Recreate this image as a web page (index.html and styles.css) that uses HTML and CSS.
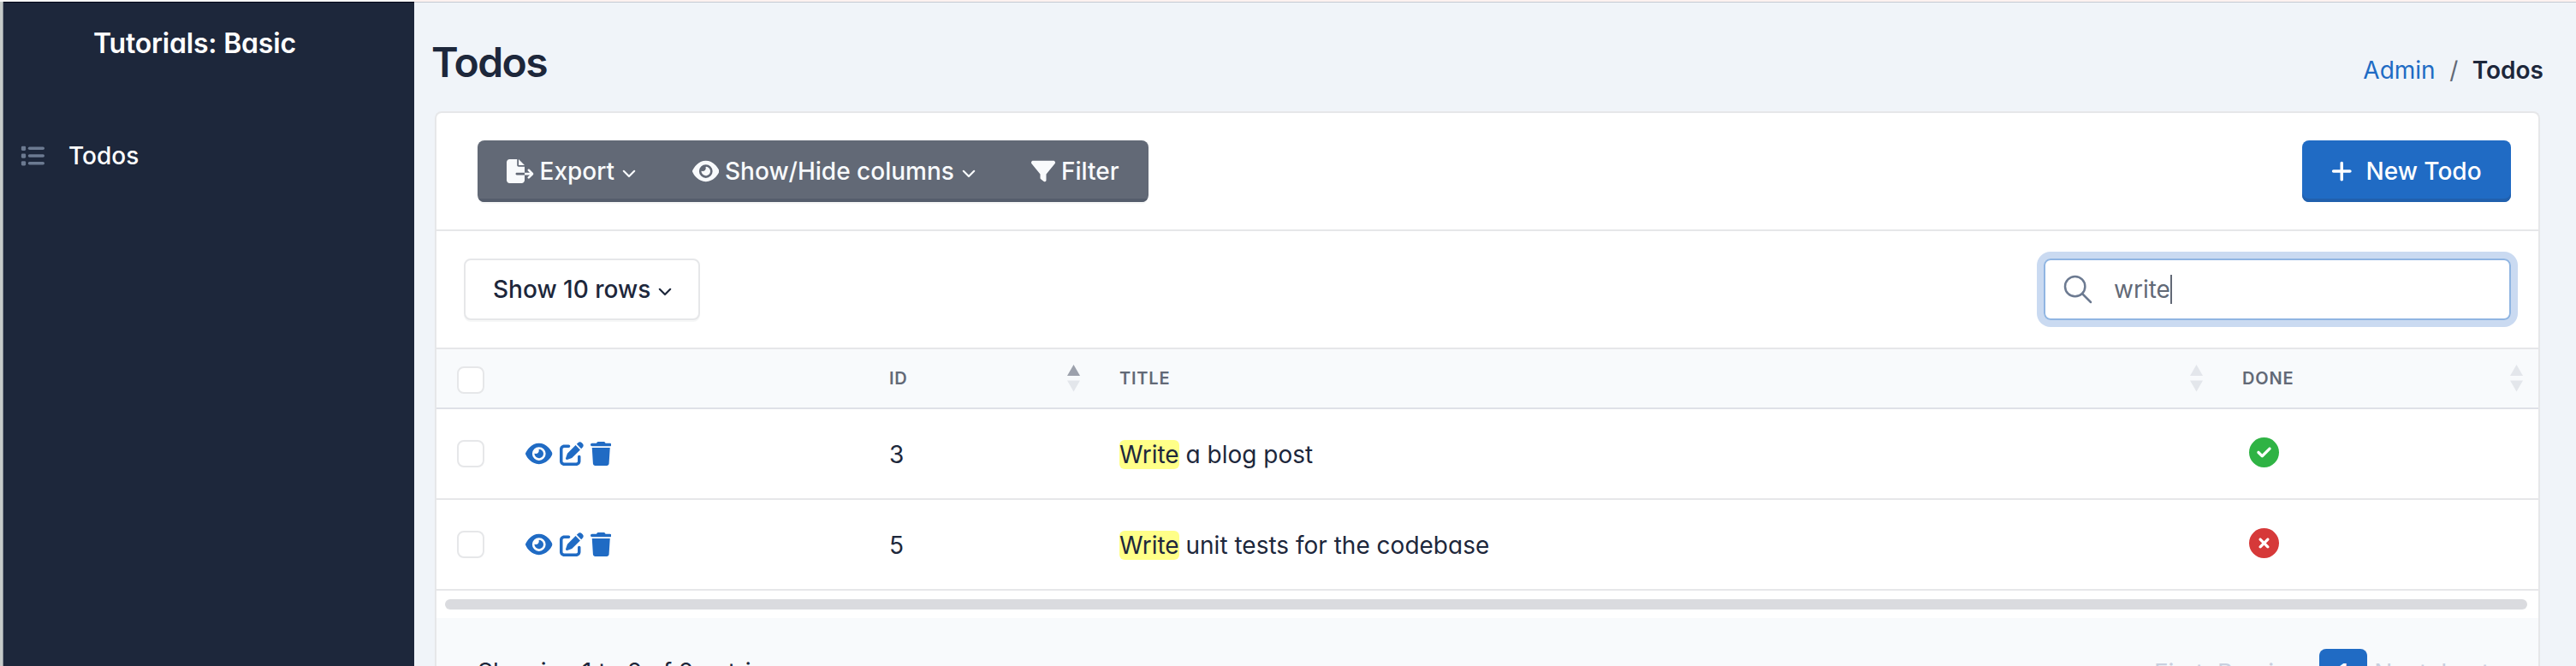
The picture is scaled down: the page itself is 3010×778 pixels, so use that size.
FILE: index.html
```html
<!DOCTYPE html>
<html lang="en">
<head>
<meta charset="utf-8">
<title>Todos - Tutorials: Basic</title>
<link rel="stylesheet" href="styles.css">
</head>
<body>
<svg class="sprite" aria-hidden="true">
  <symbol id="eye" viewBox="0 0 576 512"><path d="M288 32c-80.8 0-145.5 36.8-192.6 80.6C48.6 156 17.3 208 2.5 243.7c-3.3 7.9-3.3 16.7 0 24.6C17.3 304 48.6 356 95.4 399.4C142.5 443.2 207.2 480 288 480s145.5-36.8 192.6-80.6c46.8-43.5 78.1-95.4 93-131.1c3.3-7.9 3.3-16.7 0-24.6c-14.9-35.7-46.2-87.7-93-131.1C433.5 68.8 368.8 32 288 32zM144 256a144 144 0 1 1 288 0 144 144 0 1 1 -288 0zm144-64c0 35.3-28.7 64-64 64c-7.1 0-13.9-1.2-20.3-3.3c-5.5-1.8-11.9 1.6-11.7 7.4c.3 6.9 1.3 13.8 3.2 20.7c13.7 51.2 66.4 81.6 117.6 67.9s81.6-66.4 67.9-117.6c-11.1-41.5-47.8-69.4-88.6-71.1c-5.8-.2-9.2 6.1-7.4 11.7c2.1 6.4 3.3 13.2 3.3 20.3z"/></symbol>
  <symbol id="edit" viewBox="0 0 512 512"><path d="M471.6 21.7c-21.9-21.9-57.3-21.9-79.2 0L362.3 51.7l97.9 97.9 30.1-30.1c21.9-21.9 21.9-57.3 0-79.2L471.6 21.7zm-299.2 220c-6.1 6.1-10.8 13.6-13.5 21.9l-29.6 88.8c-2.9 8.6-.6 18.1 5.8 24.6s15.9 8.7 24.6 5.8l88.8-29.6c8.2-2.7 15.7-7.4 21.9-13.5L437.7 172.3 339.7 74.3 172.4 241.7zM96 64C43 64 0 107 0 160V416c0 53 43 96 96 96H352c53 0 96-43 96-96V320c0-17.7-14.3-32-32-32s-32 14.3-32 32v96c0 17.7-14.3 32-32 32H96c-17.7 0-32-14.3-32-32V160c0-17.7 14.3-32 32-32h96c17.7 0 32-14.3 32-32s-14.3-32-32-32H96z"/></symbol>
  <symbol id="trash" viewBox="0 0 448 512"><path d="M135.2 17.7L128 32H32C14.3 32 0 46.3 0 64S14.3 96 32 96H416c17.7 0 32-14.3 32-32s-14.3-32-32-32H320l-7.2-14.3C307.4 6.8 296.3 0 284.2 0H163.8c-12.1 0-23.2 6.8-28.6 17.7zM416 128H32L53.2 467c1.6 25.3 22.6 45 47.9 45H346.9c25.3 0 46.3-19.7 47.9-45L416 128z"/></symbol>
  <symbol id="filter" viewBox="0 0 512 512"><path d="M3.9 54.9C10.5 40.9 24.5 32 40 32H472c15.5 0 29.5 8.9 36.1 22.9s4.6 30.5-5.2 42.5L320 320.9V448c0 12.1-6.8 23.2-17.7 28.6s-23.8 4.3-33.5-3l-64-48c-8.1-6-12.8-15.5-12.8-25.6V320.9L9 97.3C-.7 85.4-2.8 68.8 3.9 54.9z"/></symbol>
  <symbol id="export" viewBox="0 0 576 512"><path d="M0 64C0 28.7 28.7 0 64 0H224V128c0 17.7 14.3 32 32 32H384V288H216c-13.3 0-24 10.7-24 24s10.7 24 24 24H384V448c0 35.3-28.7 64-64 64H64c-35.3 0-64-28.7-64-64V64zM384 336V288H494.1l-39-39c-9.4-9.4-9.4-24.6 0-33.9s24.6-9.4 33.9 0l80 80c9.4 9.4 9.4 24.6 0 33.9l-80 80c-9.4 9.4-24.6 9.4-33.9 0s-9.4-24.6 0-33.9l39-39H384zm0-208H256V0L384 128z"/></symbol>
  <symbol id="plus" viewBox="0 0 448 512"><path d="M256 80c0-17.7-14.3-32-32-32s-32 14.3-32 32V224H48c-17.7 0-32 14.3-32 32s14.3 32 32 32H192V432c0 17.7 14.3 32 32 32s32-14.3 32-32V288H400c17.7 0 32-14.3 32-32s-14.3-32-32-32H256V80z"/></symbol>
  <symbol id="check" viewBox="0 0 512 512"><path d="M256 512A256 256 0 1 0 256 0a256 256 0 1 0 0 512zM369 209L241 337c-9.4 9.4-24.6 9.4-33.9 0l-64-64c-9.4-9.4-9.4-24.6 0-33.9s24.6-9.4 33.9 0l47 47L335 175c9.4-9.4 24.6-9.4 33.9 0s9.4 24.6 0 33.9z"/></symbol>
  <symbol id="xmark" viewBox="0 0 512 512"><path d="M256 512A256 256 0 1 0 256 0a256 256 0 1 0 0 512zM175 175c9.4-9.4 24.6-9.4 33.9 0l47 47 47-47c9.4-9.4 24.6-9.4 33.9 0s9.4 24.6 0 33.9l-47 47 47 47c9.4 9.4 9.4 24.6 0 33.9s-24.6 9.4-33.9 0l-47-47-47 47c-9.4 9.4-24.6 9.4-33.9 0s-9.4-24.6 0-33.9l47-47-47-47c-9.4-9.4-9.4-24.6 0-33.9z"/></symbol>
  <symbol id="chevron" viewBox="0 0 16 10"><path class="line" d="M1.8 1.8 8 8l6.200-6.200"/></symbol>
</svg>
<div class="topline"></div>
<div class="app">
  <div class="edge"></div>
  <aside class="sidebar">
    <div class="brand">Tutorials: Basic</div>
    <a class="nav-item">
      <svg class="nav-icon" viewBox="0 0 512 512"><rect x="16" y="48" width="96" height="96" rx="24"/><rect x="16" y="208" width="96" height="96" rx="24"/><rect x="16" y="368" width="96" height="96" rx="24"/><rect x="160" y="64" width="352" height="64" rx="32"/><rect x="160" y="224" width="352" height="64" rx="32"/><rect x="160" y="384" width="352" height="64" rx="32"/></svg>
      <span>Todos</span>
    </a>
  </aside>
  <main class="main">
    <header class="page-header">
      <h1 class="page-title">Todos</h1>
      <nav class="breadcrumb"><a class="crumb-link">Admin</a><span class="crumb-sep">/</span><span class="crumb-current">Todos</span></nav>
    </header>
    <section class="card">
      <div class="card-header">
        <div class="btn-group">
          <button class="btn btn-secondary btn-export"><svg class="ic w36"><use href="#export"/></svg><span>Export</span><svg class="chev"><use href="#chevron"/></svg></button>
          <button class="btn btn-secondary btn-columns"><svg class="ic w36"><use href="#eye"/></svg><span>Show/Hide columns</span><svg class="chev"><use href="#chevron"/></svg></button>
          <button class="btn btn-secondary btn-filter"><svg class="ic w32"><use href="#filter"/></svg><span>Filter</span></button>
        </div>
        <button class="btn btn-primary"><svg class="ic w28"><use href="#plus"/></svg><span>New Todo</span></button>
      </div>
      <div class="toolbar">
        <button class="btn btn-rows"><span>Show 10 rows</span><svg class="chev"><use href="#chevron"/></svg></button>
        <div class="search">
          <svg class="search-icon" viewBox="0 0 24 24"><circle cx="10" cy="10" r="7"/><path d="M21 21l-6-6"/></svg>
          <span class="search-text">write</span><span class="caret"></span>
        </div>
      </div>
      <div class="row head">
        <div class="cell"><span class="checkbox"></span></div>
        <div class="cell"></div>
        <div class="cell th"><span>ID</span><svg class="sort" viewBox="0 0 15 32"><path class="on" d="M7.500 0 15 13H0z"/><path d="M0 18.500h15L7.500 31.500z"/></svg></div>
        <div class="cell th"><span>TITLE</span><svg class="sort" viewBox="0 0 15 32"><path d="M7.500 0 15 13H0z"/><path d="M0 18.500h15L7.500 31.500z"/></svg></div>
        <div class="cell th th-last"><span>DONE</span><svg class="sort" viewBox="0 0 15 32"><path d="M7.500 0 15 13H0z"/><path d="M0 18.500h15L7.500 31.500z"/></svg></div>
      </div>
      <div class="row">
        <div class="cell"><span class="checkbox"></span></div>
        <div class="cell actions"><svg class="ic w36"><use href="#eye"/></svg><svg class="ic w32"><use href="#edit"/></svg><svg class="ic w28"><use href="#trash"/></svg></div>
        <div class="cell text">3</div>
        <div class="cell text"><span><mark>Write</mark> a blog post</span></div>
        <div class="cell status"><svg class="ok"><use href="#check"/></svg></div>
      </div>
      <div class="row">
        <div class="cell"><span class="checkbox"></span></div>
        <div class="cell actions"><svg class="ic w36"><use href="#eye"/></svg><svg class="ic w32"><use href="#edit"/></svg><svg class="ic w28"><use href="#trash"/></svg></div>
        <div class="cell text">5</div>
        <div class="cell text"><span><mark>Write</mark> unit tests for the codebase</span></div>
        <div class="cell status"><svg class="no"><use href="#xmark"/></svg></div>
      </div>
      <div class="scroll-track"><div class="scroll-thumb"></div></div>
      <footer class="card-footer">
        <div class="info">Showing 1 to 2 of 2 entries</div>
        <div class="pagination"><span class="page">First</span><span class="page prev">Previous</span><span class="page active">1</span><span class="page">Next</span><span class="page">Last</span></div>
      </footer>
    </section>
  </main>
</div>
</body>
</html>
```
FILE: styles.css
```css
* { box-sizing: border-box; }
html, body { margin: 0; height: 778px; overflow: hidden; }
body {
  font-family: Inter, "Liberation Sans", sans-serif;
  font-feature-settings: "liga" 0, "cv03", "cv04", "cv11";
  font-size: 28px;
  line-height: 40px;
  color: #1d273b;
  background: #f0f4f9;
}
.sprite { display: none; }
.line { fill: none; stroke: currentColor; stroke-width: 2.200; stroke-linecap: round; stroke-linejoin: round; }
.topline { height: 2px; background: linear-gradient(90deg, #f6f6f6 484px, #fdf2f0 484px); }
.app { display: flex; height: 776px; }
.edge { width: 4px; background: linear-gradient(90deg, #c6cbc9 3px, #8b9299 3px); }
.sidebar { width: 480px; background: #1d273b; border-top: 1px solid #020617; color: #fff; }
.brand { margin-top: 28px; padding-left: 105px; font-size: 32px; font-weight: 600; letter-spacing: -.2px; }
.nav-item { display: flex; align-items: center; gap: 28px; margin-top: 91px; padding-left: 20px; font-weight: 500; }
.nav-icon { width: 28px; height: 28px; fill: #6c7a91; }

.main { flex: 1; border-top: 1px solid #c5cad3; padding: 0 42px 0 24px; }
.page-header { display: flex; justify-content: space-between; height: 127px; }
.page-title { margin: 42px 0 0 -4px; font-size: 48px; line-height: 56px; font-weight: 600; letter-spacing: -1.5px; }
.breadcrumb { display: flex; gap: 16.500px; margin: 59px -4px 0 0; }
.crumb-link { color: #206bc4; }
.crumb-sep { color: #626976; }
.crumb-current { font-weight: 600; }

.card { height: 648px; overflow: hidden; background: #fff; border: 2px solid #e6e7e9; border-bottom: 0; border-radius: 8px 8px 0 0; }
.card-header { display: flex; align-items: flex-start; justify-content: space-between; height: 138px; padding: 32px 32px 0 48px; border-bottom: 2px solid #e6e7e9; }
.btn { display: flex; align-items: center; height: 72px; margin: 0; border: 0; font: inherit; font-weight: 500; font-feature-settings: inherit; white-space: nowrap; }
.btn-group { display: flex; border-radius: 8px; overflow: hidden; box-shadow: 0 2px 0 rgba(29, 39, 59, .04); }
.btn-secondary { color: #f8fafc; background: #626976; box-shadow: inset 0 -4px 0 #555d6c; gap: 7px; }
.btn-export { width: 218px; padding: 0 0 0 34px; }
.btn-columns { width: 396px; padding: 0 0 0 32.500px; }
.btn-filter { width: 170px; padding: 0 0 0 33px; }
.btn-primary { width: 244px; border-radius: 8px; padding: 0 0 0 34px; gap: 16px; color: #fff; background: #206bc4; box-shadow: inset 0 -4px 0 #2160ad; }
.ic { height: 28px; fill: currentColor; flex: none; }
.w36 { width: 31.5px; }
.w32 { width: 28px; }
.w28 { width: 24.5px; }
.chev { width: 16px; height: 10px; margin: 6px 0 0 2px; flex: none; }
.toolbar { display: flex; justify-content: space-between; height: 138px; padding: 32px; border-bottom: 2px solid #e6e7e9; }
.btn-rows { width: 276px; padding: 0 0 0 32px; gap: 7px; color: #1d273b; background: #fff; border: 2px solid #e6e7e9; border-radius: 8px; box-shadow: 0 2px 0 rgba(29, 39, 59, .04); }
.search { display: flex; align-items: center; width: 546px; height: 72px; padding-left: 18px; border: 2px solid #90b5e2; border-radius: 8px; box-shadow: 0 0 0 8px #cadaf1; color: #626976; }
.search-icon { width: 40px; height: 40px; fill: none; stroke: #6c7a91; stroke-width: 1.500; stroke-linecap: round; }
.search-text { margin-left: 22px; }
.caret { width: 2px; height: 34px; background: #626976; }

.row { display: grid; grid-template-columns: 80px 425px 269px 1312px 1fr; height: 106px; border-bottom: 2px solid #e6e7e9; }
.head { height: 70px; background: #f8fafc; border-bottom-color: #dfe1e7; }
.cell { display: flex; align-items: center; padding: 0 22px 0 24px; }
.th { justify-content: space-between; font-size: 20px; font-weight: 600; letter-spacing: .8px; color: #626976; padding-bottom: 1px; }
.th-last { padding-right: 18px; }
.sort { width: 15px; height: 32px; fill: #e3e6eb; }
.on { fill: #9ca1ac; }
.checkbox { width: 32px; height: 32px; background: #fff; border: 2px solid #e6e7e9; border-radius: 8px; }
.head .checkbox { margin-top: 4px; }
.actions { gap: 8px; color: #206bc4; }
.text { padding-top: 2px; }
mark { padding: 0; color: inherit; background: #ffff88; border-radius: 6px; }
.status { padding-left: 32px; padding-bottom: 3px; }
.status svg { width: 35px; height: 35px; }
.ok { fill: #2fb344; }
.no { fill: #d63939; }
.scroll-track { height: 32px; padding: 10px 13px 0 10px; }
.scroll-thumb { height: 12px; border-radius: 6px; background: #dadbdf; }
.card-footer { display: flex; justify-content: space-between; height: 56px; overflow: hidden; padding: 36px 49px 0 48px; background: #f8fafc; }
.info { padding-top: 7px; }
.pagination { display: flex; height: 56px; line-height: 56px; color: #c8d0df; }
.page { padding: 0 8px; height: 56px; }
.prev { padding-right: 5px; }
.active { width: 56px; padding: 0; text-align: center; border-radius: 8px; color: #fff; background: #206bc4; }
```
